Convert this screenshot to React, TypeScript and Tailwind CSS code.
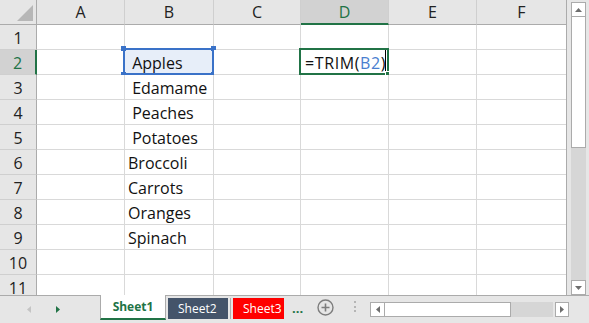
import { Fragment } from 'react'

const COLS = ['A', 'B', 'C', 'D', 'E', 'F']
const ROWS = [1, 2, 3, 4, 5, 6, 7, 8, 9, 10, 11]

const colB: Record<number, string> = {
  2: ' Apples',
  3: ' Edamame',
  4: ' Peaches',
  5: ' Potatoes',
  6: 'Broccoli',
  7: 'Carrots',
  8: 'Oranges',
  9: 'Spinach',
}

function Corner() {
  return (
    <div className="h-[25px] bg-[#e6e6e6] border-r border-b border-[#ababab]">
      <svg width="36" height="24" viewBox="0 0 36 24">
        <polygon points="33,5 33,21 17,21" fill="#b7b7b7" />
      </svg>
    </div>
  )
}

function ColHeader({ label }: { label: string }) {
  const active = label === 'D'
  const last = label === 'F'
  return (
    <div
      className={`h-[25px] flex justify-center leading-[24px] text-[16px] border-b ${
        last ? '' : 'border-r border-r-[#cfcfcf]'
      } ${
        active
          ? 'bg-[#d2d2d2] text-[#217346] border-b-2 border-b-[#217346]'
          : 'bg-[#e6e6e6] text-[#222] border-b-[#ababab]'
      }`}
    >
      {label}
    </div>
  )
}

function RowHeader({ n }: { n: number }) {
  const active = n === 2
  return (
    <div
      className={`h-[25px] flex justify-center pt-[1px] leading-[24px] text-[16px] border-b border-b-[#cfcfcf] ${
        active
          ? 'bg-[#d2d2d2] text-[#217346] border-r-2 border-r-[#217346]'
          : 'bg-[#e6e6e6] text-[#222] border-r border-r-[#ababab]'
      }`}
    >
      {n}
    </div>
  )
}

function Cell({ row, col }: { row: number; col: string }) {
  const last = col === 'F'
  const selB = row === 2 && col === 'B'
  const editD = row === 2 && col === 'D'
  const text = col === 'B' ? colB[row] : undefined
  return (
    <div
      className={`relative h-[25px] border-b border-[#d9d9d9] ${last ? '' : 'border-r'} ${
        selB ? 'bg-[#e7eef9]' : 'bg-white'
      } pl-[3px] pt-[1px] leading-[24px] text-[16px] text-[#111] whitespace-pre`}
    >
      {text}
      {selB && (
        <div className="absolute -left-[2px] -top-[2px] -right-[1px] -bottom-[1px] border-2 border-[#3a72c8]">
          <span className="absolute -left-[4px] -top-[4px] w-[5px] h-[5px] bg-[#3a72c8]" />
          <span className="absolute -right-[4px] -top-[4px] w-[5px] h-[5px] bg-[#3a72c8]" />
          <span className="absolute -left-[4px] -bottom-[4px] w-[5px] h-[5px] bg-[#3a72c8]" />
          <span className="absolute -right-[4px] -bottom-[4px] w-[5px] h-[5px] bg-[#3a72c8]" />
        </div>
      )}
      {editD && (
        <>
          <span className="pl-[1px] tracking-[0.6px]">
            =TRIM(<span className="text-[#4a7ecf]">B2</span>)
          </span>
          <div className="absolute -left-[2px] -top-[2px] -right-[1px] -bottom-[1px] border-2 border-[#217346]">
            <span className="absolute right-[1px] top-0 bottom-0 w-px bg-black" />
            <span className="absolute -right-[5px] -bottom-[5px] w-[7px] h-[7px] bg-[#217346] border border-white" />
          </div>
        </>
      )}
    </div>
  )
}

function Tri({ dir, color }: { dir: 'up' | 'down' | 'left' | 'right'; color: string }) {
  const pts = {
    up: '0,4 7,4 3.5,0',
    down: '0,0 7,0 3.5,4',
    left: '4,0 4,7 0,3.5',
    right: '0,0 0,7 4,3.5',
  }[dir]
  const vertical = dir === 'up' || dir === 'down'
  return (
    <svg width={vertical ? 7 : 4} height={vertical ? 4 : 7} viewBox={vertical ? '0 0 7 4' : '0 0 4 7'}>
      <polygon points={pts} fill={color} />
    </svg>
  )
}

function VScroll() {
  return (
    <div className="w-[22px] h-full bg-[#e6e6e6] pl-[4px] pt-[2px] flex flex-col">
      <div className="w-[15px] h-[15px] bg-white border border-[#ababab] flex items-center justify-center">
        <Tri dir="up" color="#6e6e6e" />
      </div>
      <div className="w-[15px] h-[131px] bg-white border border-t-0 border-[#ababab]" />
      <div className="w-[15px] flex-1 bg-[#d6d6d6]" />
      <div className="w-[15px] h-[15px] bg-white border border-[#ababab] flex items-center justify-center">
        <Tri dir="down" color="#6e6e6e" />
      </div>
    </div>
  )
}

function TabBar() {
  return (
    <div className="h-[28px] flex items-start text-[12px]">
      <div className="w-[100px] h-full border-t border-[#ababab] flex items-center pl-[27px] gap-[25px] pb-[1px]">
        <Tri dir="left" color="#c4c4c4" />
        <Tri dir="right" color="#217346" />
      </div>
      <div className="w-[66px] h-[25px] bg-white border-x border-[#ababab] border-b-2 border-b-[#217346] flex items-center justify-center font-bold text-[#217346]">
        Sheet1
      </div>
      <div className="flex-1 h-full border-t border-[#ababab] flex items-start pt-[2px] pl-[2px]">
        <div className="w-[60px] h-[21px] bg-[#44546a] text-white flex items-center pl-[10px]">Sheet2</div>
        <div className="ml-[2px] w-px h-[21px] bg-[#b0b0b0]" />
        <div className="ml-[2px] w-[51px] h-[21px] bg-[#ff0000] text-white flex items-center pl-[10px] overflow-hidden whitespace-nowrap">
          Sheet3
        </div>
        <div className="w-[26px] h-[21px] pl-[8px] flex items-center font-bold text-[13px] text-[#217346] leading-none">
          ...
        </div>
        <svg width="17" height="17" viewBox="0 0 17 17" className="ml-[7px] mt-[1px]">
          <circle cx="8.5" cy="8.5" r="7.5" fill="none" stroke="#7d7d7d" strokeWidth="1.4" />
          <path d="M8.5 4.5v8M4.5 8.5h8" stroke="#7d7d7d" strokeWidth="1.6" />
        </svg>
        <div className="ml-[20px] mt-[3px] h-[11px] w-[2px] flex flex-col justify-between">
          <span className="w-[2px] h-[2px] bg-[#b5b5b5]" />
          <span className="w-[2px] h-[2px] bg-[#b5b5b5]" />
          <span className="w-[2px] h-[2px] bg-[#b5b5b5]" />
        </div>
        <div className="ml-[14px] mt-[4px] flex items-start">
          <div className="w-[15px] h-[15px] bg-white border border-[#ababab] flex items-center justify-center">
            <Tri dir="left" color="#6e6e6e" />
          </div>
          <div className="w-[126px] h-[15px] bg-white border border-l-0 border-[#ababab]" />
          <div className="w-[42px] h-[15px] bg-[#d6d6d6]" />
          <div className="ml-[2px] w-[14px] h-[15px] bg-white border border-[#ababab] flex items-center justify-center">
            <Tri dir="right" color="#6e6e6e" />
          </div>
        </div>
      </div>
    </div>
  )
}

export default function App() {
  return (
    <div className="w-[589px] h-[323px] bg-[#e6e6e6] flex flex-col overflow-hidden font-['Open_Sans',sans-serif]">
      <div className="h-[295px] flex">
        <div className="w-[567px] h-full overflow-hidden border-r border-[#ababab] bg-white">
          <div className="grid grid-cols-[37px_88px_89px_87px_88px_88px_89px]">
            <Corner />
            {COLS.map((c) => (
              <ColHeader key={c} label={c} />
            ))}
            {ROWS.map((r) => (
              <Fragment key={r}>
                <RowHeader n={r} />
                {COLS.map((c) => (
                  <Cell key={c} row={r} col={c} />
                ))}
              </Fragment>
            ))}
          </div>
        </div>
        <VScroll />
      </div>
      <TabBar />
    </div>
  )
}
